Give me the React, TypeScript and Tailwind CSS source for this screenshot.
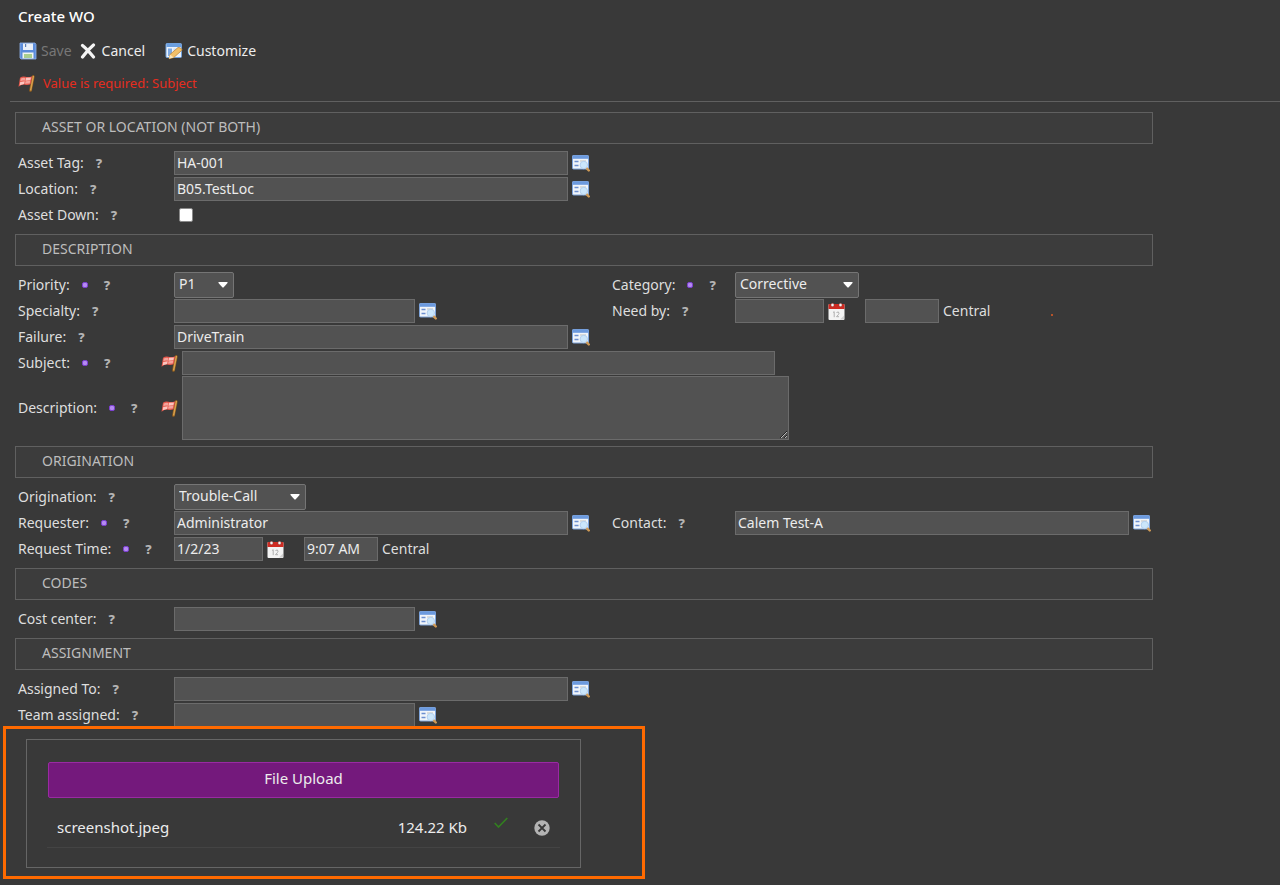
import { useState } from 'react'
import type { ReactNode } from 'react'

interface FieldProps {
  id: string
  label: string
  required?: boolean
  flagged?: boolean
  children: ReactNode
}

const inputClass =
  'h-6 border border-[#6b6b6b] bg-[#525252] px-0.5 pb-0.5 text-sm text-[#ececec] outline-none focus:border-[#9a9a9a]'

function SaveIcon() {
  return (
    <svg width="18" height="18" viewBox="0 0 18 18" aria-hidden="true">
      <path d="M1 1h15l1 1.500V17H2L1 16z" fill="#5b8cdb" stroke="#8fb2ea" strokeWidth=".8" />
      <rect x="4" y="1.500" width="10" height="6.500" fill="#e9eff8" />
      <rect x="6" y="2" width="1.200" height="3" fill="#5b7fb8" />
      <rect x="3.500" y="10.500" width="11" height="6" fill="#f2f6ee" />
      <rect x="5" y="12" width="8" height="4" fill="#a9cf8f" />
    </svg>
  )
}

function CancelIcon() {
  return (
    <svg width="16" height="16" viewBox="0 0 16 16" aria-hidden="true">
      <path d="M2.500 2.500Q7 6 13.500 14M13.500 2Q8 6.500 2.500 14" fill="none" stroke="#f4f4f4" strokeWidth="3.200" strokeLinecap="round" />
    </svg>
  )
}

function CustomizeIcon() {
  return (
    <svg width="18" height="18" viewBox="0 0 18 18" aria-hidden="true">
      <rect x="1" y="1.500" width="15.500" height="14" rx="1" fill="#eaf2fc" stroke="#6fa0dc" />
      <rect x="1.500" y="2" width="14.500" height="3" fill="#6b9fe0" />
      <rect x="3" y="6.500" width="4" height="7.500" fill="#7eaae4" />
      <rect x="8.500" y="6.500" width="6.500" height="4" fill="#c8dcf5" />
      <path d="M4 16.800l1-4.300 8-7q3-.5 4.200 2.500l-8.400 7.500z" fill="#f2c06a" stroke="#b97e2c" strokeWidth=".7" />
      <path d="M4 16.800l1-4.300 3.800 3z" fill="#f9e4bb" />
    </svg>
  )
}

function FlagIcon() {
  return (
    <svg width="17" height="17" viewBox="0 0 17 17" className="shrink-0" aria-hidden="true">
      <path d="M15.300 1.500L12.500 15.500" stroke="#8a5a1e" strokeWidth="2.800" strokeLinecap="round" />
      <path d="M15.300 1.500L12.700 15" stroke="#d8a04c" strokeWidth="1.500" strokeLinecap="round" />
      <path d="M2 2.800Q4.500 1 7.500 1.800T14.300 1.200L12.600 9.300Q10 10.300 7 9.700T.5 11.800Z" fill="#e4574b" />
      <path d="M2.800 3.600Q5 2.500 7.300 3L6.800 5.700Q4.500 5.200 2.300 6.200ZM7.500 6.200L12.300 5.700 11.700 8.500 7 8.800Z" fill="#f4a39b" />
      <path d="M8 2.800L13 2.400 12.400 5.200 7.400 5.700ZM2.200 6.900L6.700 6.200 6.200 8.900 1.700 10.200Z" fill="#fbc5bf" />
    </svg>
  )
}

function LookupIcon() {
  return (
    <svg width="18" height="18" viewBox="0 0 18 18" aria-hidden="true">
      <rect x=".5" y="1.500" width="16" height="13.500" rx="1" fill="#f1f5fa" stroke="#7ea4db" />
      <rect x=".5" y="1.500" width="16" height="3.300" fill="#6c9ade" />
      <path d="M2.500 7.500h4M2.500 11.500h4" stroke="#6d8fd0" strokeWidth="1.600" />
      <path d="M8 7h6M8 10h2" stroke="#c4c1ba" strokeWidth="1.200" />
      <path d="M14.500 14.200l2.300 2.300" stroke="#d09a55" strokeWidth="2.400" strokeLinecap="round" />
      <circle cx="11.800" cy="11" r="3.700" fill="#cbe6fb" stroke="#b4d0ee" />
    </svg>
  )
}

function CalendarIcon() {
  return (
    <svg width="17" height="19" viewBox="0 0 17 19" aria-hidden="true">
      <rect x=".5" y="2" width="16" height="16" rx="1" fill="#f3f3f3" />
      <path d="M.5 3q0-1 1-1h14q1 0 1 1v4H.5z" fill="#cf2b22" />
      <circle cx="4.500" cy="3" r="1.700" fill="#f5f5f5" stroke="#8e2019" strokeWidth=".5" />
      <circle cx="12.500" cy="3" r="1.700" fill="#f5f5f5" stroke="#8e2019" strokeWidth=".5" />
      <path d="M5 10.500l1.200-.8v5.500M8.500 10.500q2.500-1.500 2.500.8 0 1-2.500 3.400H11" fill="none" stroke="#b0b0b0" />
      <path d="M12 17.500l4-4v3.500q0 .5-.5.500z" fill="#d2d2d2" />
    </svg>
  )
}

function Field({ id, label, required, flagged, children }: FieldProps) {
  return (
    <>
      <div className="flex items-center">
        <label htmlFor={id}>{label}</label>
        {required && <span className="ml-3 size-1.5 rounded-xs border border-[#7b3fd0] bg-[#b48af0]" />}
        <button type="button" aria-label={`Help for ${label}`} className={`${required ? 'ml-4' : 'ml-3'} text-[13px] font-extrabold text-[#b4b4b4]`}>
          ?
        </button>
        {flagged && <span className="mr-1 ml-auto"><FlagIcon /></span>}
      </div>
      <div className="flex items-center">{children}</div>
    </>
  )
}

function Row({ children }: { children: ReactNode }) {
  return <div className="grid min-h-[26px] grid-cols-[156px_438px_123px_1fr]">{children}</div>
}

// Rows with a warning flag give the label column a bit more room
function WideRow({ children }: { children: ReactNode }) {
  return <div className="grid min-h-[26px] grid-cols-[164px_1fr]">{children}</div>
}

function Section({ title, children }: { title: string; children: ReactNode }) {
  return (
    <section>
      <div className="pr-[127px] pl-[15px]">
        <h2 className="flex h-8 items-center border border-[#606060] bg-[#3c3c3c] pb-0.5 pl-[26px] text-sm text-[#bdbdbd]">
          {title}
        </h2>
      </div>
      <div className="py-1.5 pl-[18px]">{children}</div>
    </section>
  )
}

function LookupInput({ id, value = '', small }: { id: string; value?: string; small?: boolean }) {
  return (
    <>
      <input id={id} type="text" defaultValue={value} className={`${inputClass} ${small ? 'w-[241px]' : 'w-[394px]'}`} />
      <button type="button" aria-label="Lookup" className="ml-1 shrink-0">
        <LookupIcon />
      </button>
    </>
  )
}

function SelectBox({ id, options, width }: { id: string; options: string[]; width: string }) {
  return (
    <span className={`relative ${width}`}>
      <select id={id} className="block h-[26px] w-full appearance-none rounded-xs border border-[#757575] bg-[#525252] pb-0.5 pl-1 text-sm text-[#ececec] outline-none">
        {options.map((o) => <option key={o}>{o}</option>)}
      </select>
      <svg width="10" height="6" viewBox="0 0 10 6" className="pointer-events-none absolute top-2.5 right-1.5" aria-hidden="true">
        <path d="M.5 0h9v1L5.500 5.500h-1L.5 1z" fill="#fff" />
      </svg>
    </span>
  )
}

function DateTime({ id, date = '', time = '' }: { id: string; date?: string; time?: string }) {
  return (
    <>
      <input id={id} type="text" defaultValue={date} className={`${inputClass} w-[89px]`} />
      <button type="button" aria-label="Pick a date" className="ml-1 shrink-0">
        <CalendarIcon />
      </button>
      <input type="text" aria-label="Time" defaultValue={time} className={`${inputClass} ml-5 w-[74px]`} />
      <span className="ml-1">Central</span>
    </>
  )
}

export default function App() {
  const [files, setFiles] = useState([{ name: 'screenshot.jpeg', size: '124.22 Kb' }])

  return (
    <div className="min-h-screen bg-[#393939] font-['Noto_Sans',sans-serif] text-sm text-[#dedede]">
      {/* Header */}
      <header>
        <h1 className="flex h-[34px] items-center pl-[18px] text-[15px] font-medium text-white">Create WO</h1>
        <div className="flex h-[34px] items-center pl-[19px] text-[#ededed]">
          <button type="button" disabled className="flex items-center gap-1 text-[#777777]">
            <SaveIcon /> Save
          </button>
          <button type="button" className="ml-2 flex items-center gap-1.5">
            <CancelIcon /> Cancel
          </button>
          <button type="button" className="ml-5 flex items-center gap-1">
            <CustomizeIcon /> Customize
          </button>
        </div>
        <p role="alert" className="flex h-[30px] items-center gap-2 pl-[18px] text-[13px] text-[#e52d20]">
          <FlagIcon /> Value is required: Subject
        </p>
        <div className="ml-2.5 h-1 border-b border-[#606060]" />
      </header>

      <form className="pt-2.5" onSubmit={(e) => e.preventDefault()}>
        <Section title="ASSET OR LOCATION (NOT BOTH)">
          <Row>
            <Field id="asset" label="Asset Tag:"><LookupInput id="asset" value="HA-001" /></Field>
          </Row>
          <Row>
            <Field id="location" label="Location:"><LookupInput id="location" value="B05.TestLoc" /></Field>
          </Row>
          <Row>
            <Field id="down" label="Asset Down:">
              <input id="down" type="checkbox" className="ml-[5px] size-3.5 appearance-none rounded-xs border border-[#8a8a8a] bg-white checked:bg-[#74197c]" />
            </Field>
          </Row>
        </Section>

        <Section title="DESCRIPTION">
          <Row>
            <Field id="priority" label="Priority:" required>
              <SelectBox id="priority" options={['P1', 'P2', 'P3']} width="w-[60px]" />
            </Field>
            <Field id="category" label="Category:" required>
              <SelectBox id="category" options={['Corrective', 'Preventive']} width="w-[124px]" />
            </Field>
          </Row>
          <Row>
            <Field id="specialty" label="Specialty:"><LookupInput id="specialty" small /></Field>
            <Field id="needby" label="Need by:">
              <DateTime id="needby" />
              <span className="mt-2 ml-[61px] size-0.5 bg-[#b5532a]" />
            </Field>
          </Row>
          <Row>
            <Field id="failure" label="Failure:"><LookupInput id="failure" value="DriveTrain" /></Field>
          </Row>
          <WideRow>
            <Field id="subject" label="Subject:" required flagged>
              <input id="subject" type="text" className={`${inputClass} w-[593px]`} />
            </Field>
          </WideRow>
          <WideRow>
            <Field id="description" label="Description:" required flagged>
              <textarea id="description" className="block h-16 w-[607px] border border-[#6b6b6b] bg-[#525252] px-0.5 outline-none" />
            </Field>
          </WideRow>
        </Section>

        <Section title="ORIGINATION">
          <Row>
            <Field id="origination" label="Origination:">
              <SelectBox id="origination" options={['Trouble-Call', 'Inspection']} width="w-[132px]" />
            </Field>
          </Row>
          <Row>
            <Field id="requester" label="Requester:" required><LookupInput id="requester" value="Administrator" /></Field>
            <Field id="contact" label="Contact:"><LookupInput id="contact" value="Calem Test-A" /></Field>
          </Row>
          <Row>
            <Field id="reqtime" label="Request Time:" required><DateTime id="reqtime" date="1/2/23" time="9:07 AM" /></Field>
          </Row>
        </Section>

        <Section title="CODES">
          <Row>
            <Field id="cost" label="Cost center:"><LookupInput id="cost" small /></Field>
          </Row>
        </Section>

        <Section title="ASSIGNMENT">
          <Row>
            <Field id="assigned" label="Assigned To:"><LookupInput id="assigned" /></Field>
          </Row>
          <Row>
            <Field id="team" label="Team assigned:"><LookupInput id="team" small /></Field>
          </Row>
        </Section>

        {/* Upload */}
        <div className="relative -mt-2 ml-[3px] w-[642px] max-w-full border-3 border-[#ff6a00] bg-[#393939] pt-2.5 pr-[61px] pb-2 pl-5 text-[15px] text-[#ececec]">
          <div className="border border-[#666666] px-5 pt-[22px] pb-[19px]">
            <div className="px-px">
              <button type="button" className="h-9 w-full rounded-xs border border-[#9a2aa3] bg-[#74197c] pb-0.5">File Upload</button>
            </div>
            <ul>
              {files.map((f) => (
                <li key={f.name} className="flex h-[50px] items-center border-b border-[#444444] pt-2.5 pr-2.5 pl-2.5">
                  <span>{f.name}</span>
                  <span className="ml-auto">{f.size}</span>
                  <svg width="14" height="11" viewBox="0 0 14 11" className="mb-2.5 ml-[27px]" aria-label="Uploaded">
                    <path d="M.7 6l3.800 4L13.300 1" fill="none" stroke="#32801f" strokeWidth="1.600" />
                  </svg>
                  <button type="button" aria-label="Remove file" className="ml-[26px]" onClick={() => setFiles(files.filter((x) => x !== f))}>
                    <svg width="16" height="16" viewBox="0 0 16 16" aria-hidden="true">
                      <circle cx="8" cy="8" r="7.700" fill="#b3b3b3" />
                      <path d="M4.500 4.500l7 7M11.500 4.500l-7 7" stroke="#393939" strokeWidth="1.800" />
                    </svg>
                  </button>
                </li>
              ))}
            </ul>
          </div>
        </div>
      </form>
    </div>
  )
}
